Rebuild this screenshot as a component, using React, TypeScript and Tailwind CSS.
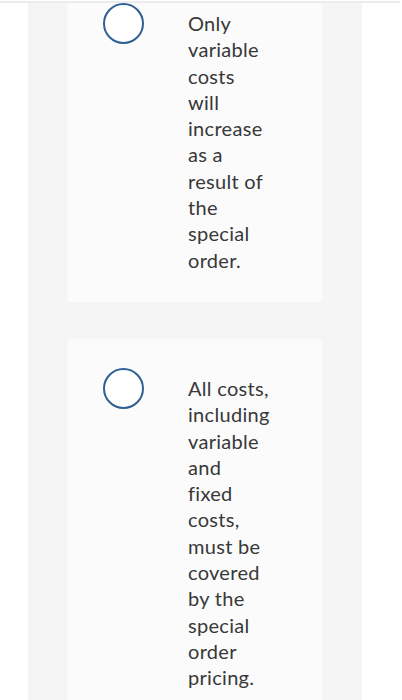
import React from "react";

const Option = ({ lines, className }: { lines: string[]; className: string }) => (
  <div className={`flex rounded-[4px] bg-[#fbfbfb] pl-[36px] ${className}`}>
    <div className="h-[41px] w-[41px] shrink-0 rounded-full border-2 border-[#2f5f93] bg-white" />
    <div
      className="ml-[44px] mt-[7px] text-[20px] leading-[26.3px] tracking-[0.3px] text-[#383838] [font-variant-ligatures:none]"
      style={{ fontFamily: "Lato, 'Open Sans', sans-serif" }}
    >
      {lines.map((l, i) => (
        <div key={i} className="whitespace-nowrap">{l}</div>
      ))}
    </div>
  </div>
);

export default function App() {
  return (
    <div className="h-[700px] overflow-hidden bg-white">
      <div className="h-px bg-white" />
      <div className="h-[2px] w-[400px] bg-[#ececec]" />
      <div className="ml-[28px] w-[334px] bg-[#f5f5f5] pl-[39px] pr-[40px] pb-[40px]">
        <Option
          className="pt-0 pb-[29px]"
          lines={["Only", "variable", "costs", "will", "increase", "as a", "result of", "the", "special", "order."]}
        />
        <Option
          className="mt-[37px] pt-[29px] pb-[28px]"
          lines={["All costs,", "including", "variable", "and", "fixed", "costs,", "must be", "covered", "by the", "special", "order", "pricing."]}
        />
      </div>
    </div>
  );
}
